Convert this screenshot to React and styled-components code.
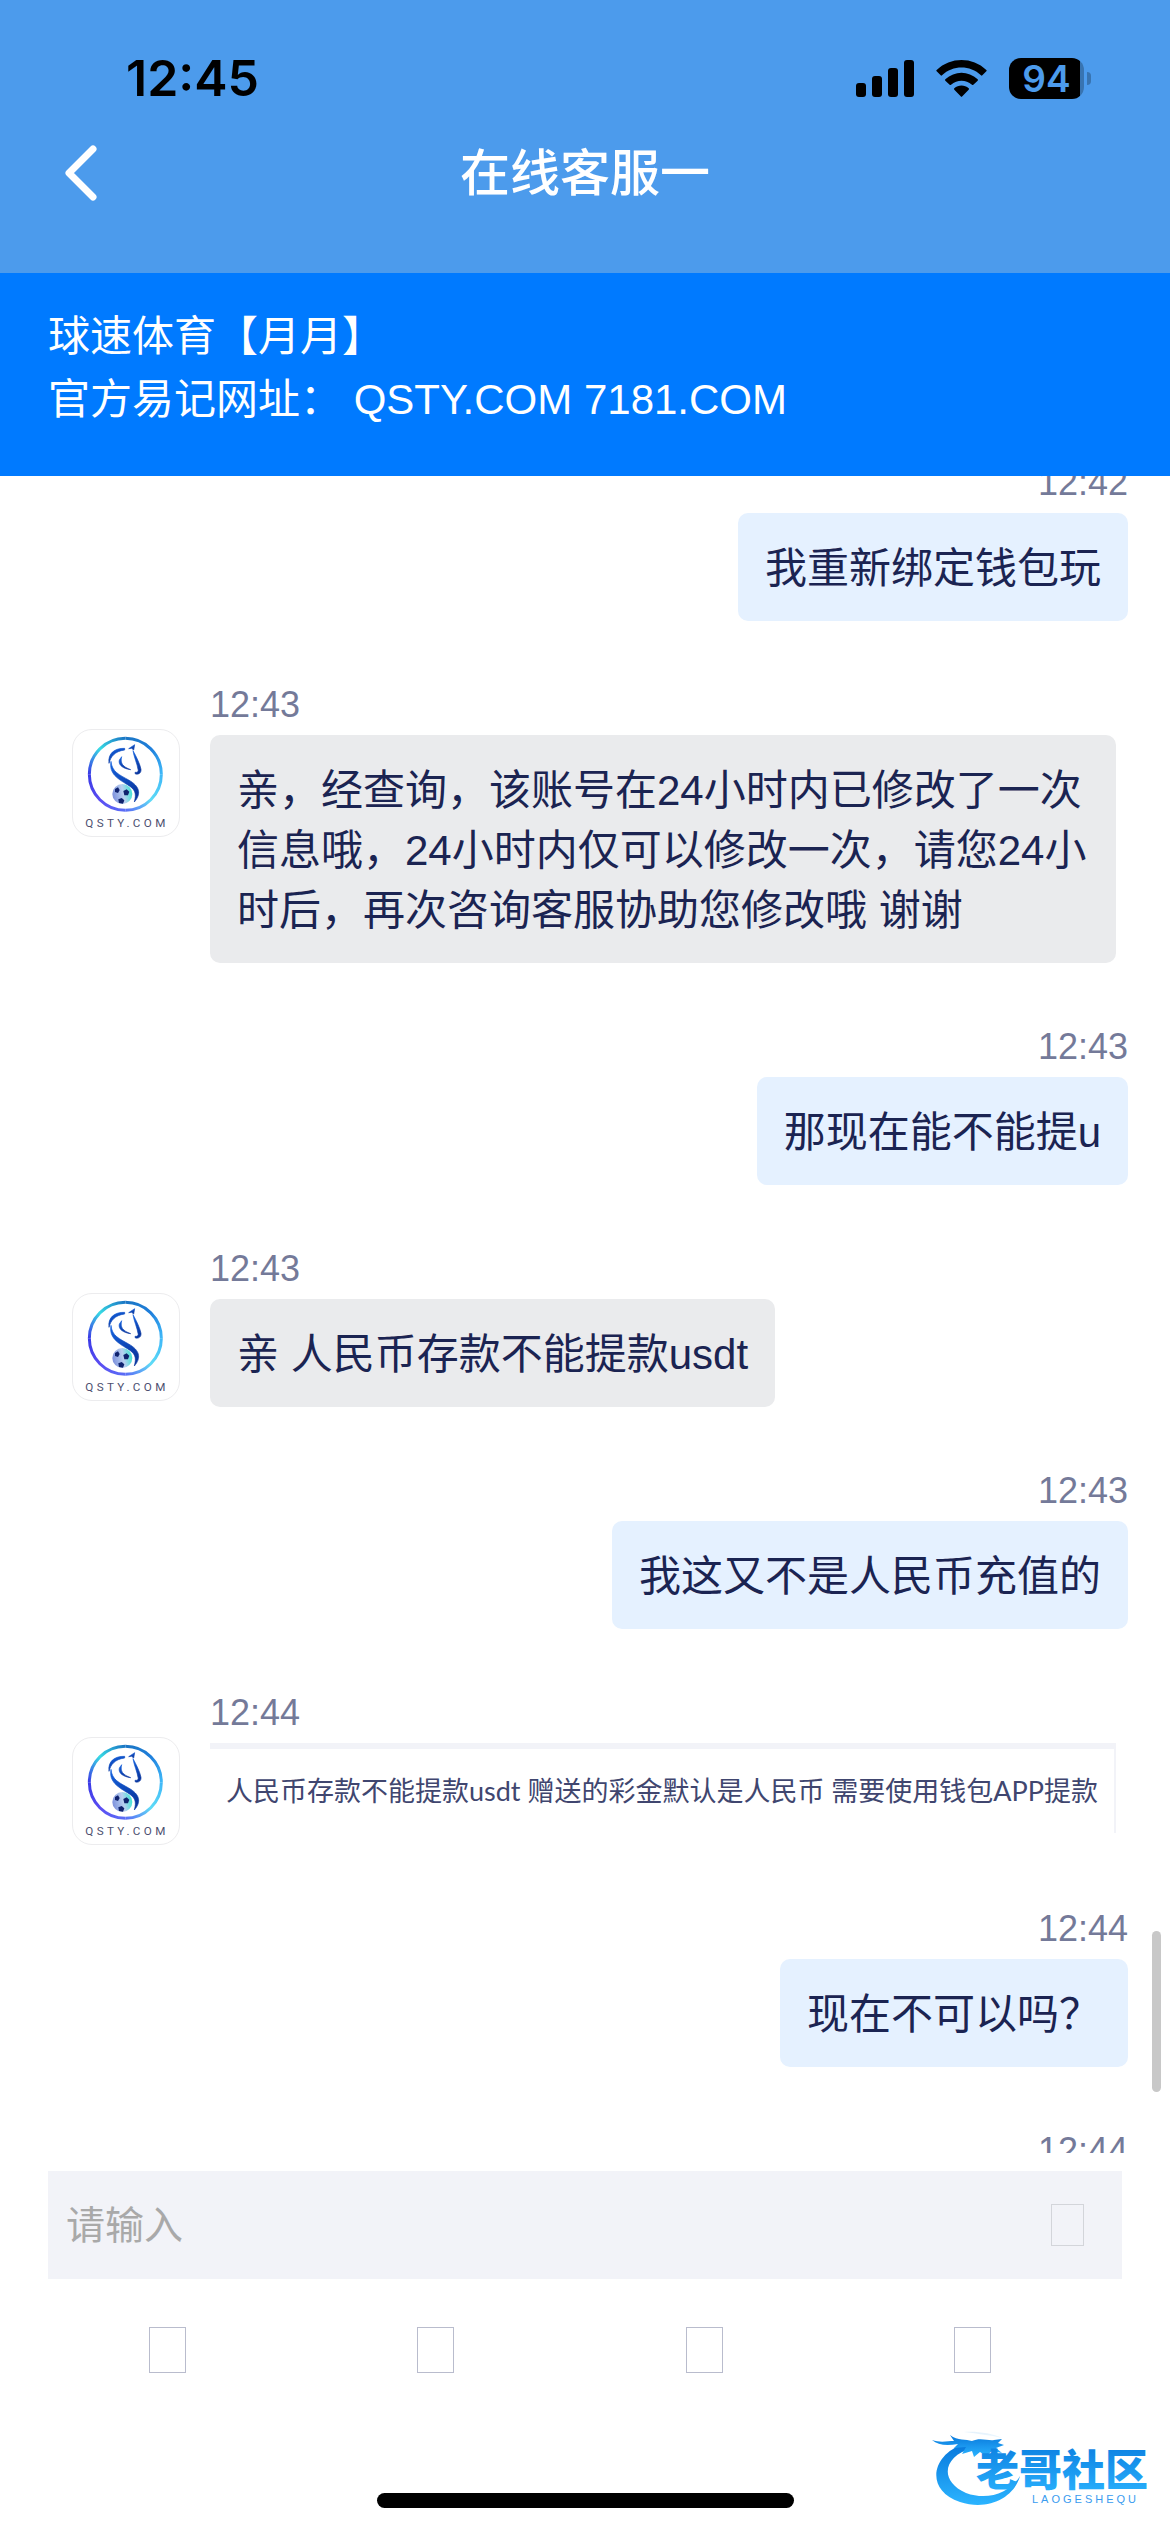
import React, { useId, useLayoutEffect, useRef, useState } from "react";
import styled, { createGlobalStyle } from "styled-components";

const GlobalStyle = createGlobalStyle`
  * {
    box-sizing: border-box;
  }
  body {
    margin: 0;
    background: #fff;
    color: #1b2452;
    font-family: "Liberation Sans", "Noto Sans CJK SC", sans-serif;
  }
  button, input {
    font-family: inherit;
  }
`;

const Page = styled.div`
  position: relative;
  display: flex;
  flex-direction: column;
  height: 100vh;
  overflow: hidden;
`;

const Header = styled.header`
  flex: none;
  background: #4c9bec;
  padding-bottom: 54px;
`;

const StatusBar = styled.div`
  display: flex;
  align-items: center;
  justify-content: space-between;
  height: 126px;
  padding: 30px 78px 0 126px;
  color: #000;
  font-family: Inter, sans-serif;
  font-weight: 600;
`;

const Clock = styled.div`
  font-size: 50px;
  line-height: 60px;
`;

const StatusIcons = styled.div`
  display: flex;
  align-items: center;
  gap: 22px;
`;

const Battery = styled.div`
  position: relative;
  width: 75px;
  height: 41px;
  margin-right: 8px;
  border-radius: 12px;
  background: linear-gradient(to right, #000 71px, #3874b1 71px);
  color: #4c9bec;
  font-size: 37px;
  line-height: 41px;
  text-align: center;
  &::after {
    content: "";
    position: absolute;
    right: -7px;
    top: 14px;
    width: 4px;
    height: 13px;
    border-radius: 0 4px 4px 0;
    background: #3874b1;
  }
`;

const NavBar = styled.nav`
  display: grid;
  grid-template-columns: 100px 1fr 100px;
  align-items: center;
  height: 93px;
  color: #fff;
`;

const BackButton = styled.button`
  display: flex;
  justify-content: flex-end;
  padding: 0;
  border: none;
  background: none;
  color: inherit;
  cursor: pointer;
`;

const Title = styled.h1`
  margin: 0;
  padding-top: 2px;
  font-size: 50px;
  font-weight: 500;
  line-height: 60px;
  text-align: center;
`;

const Notice = styled.div`
  flex: none;
  padding: 32px 48px 45px;
  background: #007aff;
  color: #fff;
  font-size: 42px;
  line-height: 63px;
`;

const NoticeLine = styled.p`
  margin: 0;
`;

const ChatArea = styled.main`
  position: relative;
  flex: 1;
  min-height: 0;
`;

const MessageList = styled.div`
  display: flex;
  flex-direction: column;
  gap: 60px;
  height: 100%;
  padding: 60px 42px 180px 72px;
  overflow-y: auto;
  scrollbar-width: none;
`;

const ScrollThumb = styled.div`
  position: absolute;
  right: 9px;
  bottom: 61px;
  width: 9px;
  height: 161px;
  border-radius: 5px;
  background: #c8c8c8;
`;

const MessageRow = styled.div`
  display: flex;
  flex: none;
  gap: 30px;
  justify-content: ${({ $mine }) => ($mine ? "flex-end" : "flex-start")};
  padding-right: ${({ $mine }) => ($mine ? "0" : "12px")};
`;

const MessageBody = styled.div`
  display: flex;
  flex-direction: column;
  align-items: ${({ $mine }) => ($mine ? "flex-end" : "flex-start")};
  gap: 6px;
  min-width: 0;
`;

const Time = styled.time`
  color: #747a99;
  font-size: 36px;
  line-height: 48px;
`;

const Bubble = styled.div`
  padding: 26px 27px 22px;
  border-radius: 10px;
  background: ${({ $mine }) => ($mine ? "#e5f1ff" : "#eaebed")};
  font-size: 42px;
  line-height: 60px;
`;

const Snippet = styled.div`
  display: flex;
  align-items: center;
  justify-content: center;
  width: 906px;
  max-width: 100%;
  height: 90px;
  margin-bottom: 12px;
  border: solid #f2f3f8;
  border-width: 6px 2px 0 0;
  color: #40466f;
  font-family: Lato, "Noto Sans CJK SC", sans-serif;
  font-size: 27px;
  line-height: 36px;
  white-space: nowrap;
`;

const AvatarFrame = styled.div`
  flex: none;
  width: 108px;
  height: 108px;
  margin-top: 48px;
  border: 1px solid #ececee;
  border-radius: 20px;
  overflow: hidden;
`;

const Footer = styled.footer`
  flex: none;
  padding-top: 18px;
`;

const InputBar = styled.form`
  display: flex;
  align-items: center;
  height: 108px;
  margin: 0 48px;
  padding: 0 38px 0 18px;
  background: #f2f3f8;
`;

const TextInput = styled.input`
  flex: 1;
  min-width: 0;
  padding: 2px 0 0;
  border: none;
  outline: none;
  background: none;
  color: #1b2452;
  font-size: 39px;
  line-height: 54px;
  &::placeholder {
    color: #a9a9a9;
    opacity: 1;
  }
`;

const SendButton = styled.button`
  width: 33px;
  height: 42px;
  padding: 0;
  border: 1px solid #d3d5da;
  background: none;
  cursor: pointer;
`;

const Toolbar = styled.div`
  display: grid;
  grid-template-columns: repeat(4, 1fr);
  place-items: center;
  height: 142px;
  padding: 0 63px 0 33px;
`;

const ToolButton = styled.button`
  width: 37px;
  height: 46px;
  padding: 0;
  border: 1px solid #b9bccd;
  background: none;
  cursor: pointer;
`;

const HomeArea = styled.div`
  display: flex;
  align-items: flex-end;
  justify-content: center;
  height: 111px;
  padding-bottom: 24px;
`;

const HomeIndicator = styled.div`
  width: 417px;
  height: 15px;
  border-radius: 8px;
  background: #000;
`;

const Watermark = styled.div`
  position: absolute;
  right: 14px;
  bottom: 22px;
  line-height: 0;
`;

const messages = [
  { id: 1, mine: true, time: "12:42", text: "我重新绑定钱包玩" },
  {
    id: 2,
    time: "12:43",
    text: "亲，经查询，该账号在24小时内已修改了一次信息哦，24小时内仅可以修改一次，请您24小时后，再次咨询客服协助您修改哦 谢谢",
  },
  { id: 3, mine: true, time: "12:43", text: "那现在能不能提u" },
  { id: 4, time: "12:43", text: "亲 人民币存款不能提款usdt" },
  { id: 5, mine: true, time: "12:43", text: "我这又不是人民币充值的" },
  {
    id: 6,
    time: "12:44",
    snippet: "人民币存款不能提款usdt 赠送的彩金默认是人民币 需要使用钱包APP提款",
  },
  { id: 7, mine: true, time: "12:44", text: "现在不可以吗？" },
  { id: 8, mine: true, time: "12:44" },
];

const tools = ["表情", "图片", "拍照", "文件"];

const SignalIcon = () => (
  <svg width="58" height="37" viewBox="0 0 58 37" aria-hidden="true">
    <rect x="0" y="23" width="10" height="14" rx="3" />
    <rect x="16" y="16" width="10" height="21" rx="3" />
    <rect x="32" y="8" width="10" height="29" rx="3" />
    <rect x="48" y="0" width="10" height="37" rx="3" />
  </svg>
);

const WifiIcon = () => (
  <svg width="51" height="37" viewBox="0 0 153 111" aria-hidden="true">
    <path d="M2 30 C44 -10 109 -10 151 30 Q153 32 151 34 L139 46 Q137 48 135 46 C102 15 51 15 18 46 Q16 48 14 46 L2 34 Q0 32 2 30 Z" />
    <path d="M28 58 C56 32 97 32 125 58 Q127 60 125 62 L112 74 Q110 76 108 74 C89 58 64 58 45 74 Q43 76 41 74 L28 62 Q26 60 28 58 Z" />
    <path d="M55 85 C67 74 86 74 98 85 Q100 87 98 89 L79 109 Q76 112 74 109 L55 89 Q53 87 55 85 Z" />
  </svg>
);

const BackIcon = () => (
  <svg width="36" height="56" viewBox="0 0 36 56" fill="none" aria-hidden="true">
    <path
      d="M29 4 L5 28 L29 52"
      stroke="currentColor"
      strokeWidth="7"
      strokeLinecap="round"
      strokeLinejoin="round"
    />
  </svg>
);

const Avatar = () => {
  const id = useId();
  // each quarter of the ring fades through three colours
  const quarters = [
    { d: "M88 163 A108 108 0 0 1 196 55", from: [0, 1], to: [1, 0], colors: ["#3b3be6", "#38dbe4", "#1b76c4"] },
    { d: "M196 55 A108 108 0 0 1 304 163", from: [0, 0], to: [1, 1], colors: ["#1b76c4", "#1f7fdc", "#3fb8f8"] },
    { d: "M304 163 A108 108 0 0 1 196 271", from: [1, 0], to: [0, 1], colors: ["#3fb8f8", "#5fdcf6", "#5a6df6"] },
    { d: "M196 271 A108 108 0 0 1 88 163", from: [1, 1], to: [0, 0], colors: ["#5a6df6", "#5b4df2", "#3b3be6"] },
  ];

  return (
    <AvatarFrame>
      <svg width="106" height="106" viewBox="39 30 318 318" fill="none" role="img" aria-label="QSTY.COM">
        <defs>
          {quarters.map(({ from, to, colors }, i) => (
            <linearGradient key={i} id={`${id}q${i}`} x1={from[0]} y1={from[1]} x2={to[0]} y2={to[1]}>
              <stop offset="0" stopColor={colors[0]} />
              <stop offset="0.5" stopColor={colors[1]} />
              <stop offset="1" stopColor={colors[2]} />
            </linearGradient>
          ))}
          <linearGradient id={`${id}horse`} x1="0" y1="0" x2="0.4" y2="1">
            <stop offset="0" stopColor="#1463e0" />
            <stop offset="1" stopColor="#0a37a0" />
          </linearGradient>
          <linearGradient id={`${id}ball`} x1="0" y1="0.6" x2="1" y2="0.4">
            <stop offset="0" stopColor="#7b8fdc" />
            <stop offset="0.55" stopColor="#b8d0f0" />
            <stop offset="1" stopColor="#3fe6d4" />
          </linearGradient>
        </defs>
        {quarters.map(({ d }, i) => (
          <path key={i} d={d} stroke={`url(#${id}q${i})`} strokeWidth="9" />
        ))}
        <g fill={`url(#${id}horse)`} stroke={`url(#${id}horse)`} strokeWidth="2" strokeLinejoin="round">
          <path d="M194 85 C164 84 143 100 147 130 C152 110 164 94 194 90 Z" />
          <path d="M206 86 L224 74 L221 90 L215 85 Z" />
          <path d="M219 92 C228 108 240 132 243 148 C244 159 236 164 226 162 L225 157 C233 158 236 154 234 148 C232 132 222 112 219 92 Z" />
          <path d="M185 110 C180 130 188 140 212 149 C190 146 174 136 178 120 Z" />
          <path d="M153 124 C156 156 178 164 206 180 C240 199 244 222 223 246 C230 220 226 208 202 194 C172 176 146 160 153 124 Z" />
        </g>
        <circle cx="187" cy="222" r="30" fill={`url(#${id}ball)`} />
        <g fill="#10236e">
          <path d="M190 213 L200 208 L208 215 L204 226 L193 226 Z" />
          <path d="M165 207 L174 202 L179 210 L174 219 L165 216 Z" />
          <path d="M175 238 L185 234 L193 241 L189 251 L177 249 Z" />
        </g>
        <text x="76" y="320" fill="#4d4f70" fontFamily="Roboto, sans-serif" fontSize="35" fontWeight="400" letterSpacing="10">
          QSTY.COM
        </text>
      </svg>
    </AvatarFrame>
  );
};

const CommunityLogo = () => (
  <svg width="226" height="84" viewBox="0 0 226 84" role="img" aria-label="老哥社区">
    <defs>
      <linearGradient id="communityRing" x1="0" y1="0" x2="0" y2="1">
        <stop offset="0" stopColor="#0878dc" />
        <stop offset="1" stopColor="#2bb4ff" />
      </linearGradient>
    </defs>
    <g fill="url(#communityRing)">
      <path d="M34 18 C2 28 -6 64 30 76 C58 85 84 72 90 50 C80 67 58 75 36 67 C8 54 14 30 42 22 Z" />
      <path d="M2 14 C10 17 18 15 24 15 L20 9 C28 15 36 13 42 15 C50 11 58 15 64 14 L72 13 L68 17 L74 19 L66 22 L72 27 L62 25 L56 30 L50 26 L44 31 L42 25 L32 28 L36 21 L24 22 L28 18 C16 20 8 19 2 14 Z" />
      <path d="M34 6 C46 5 62 7 72 12 C60 9 48 8 34 6 Z" opacity="0.1" />
    </g>
    <text
      x="46"
      y="60"
      fill="url(#communityRing)"
      fontFamily="Noto Sans CJK SC, sans-serif"
      fontSize="43"
      fontWeight="900"
    >
      老哥社区
    </text>
    <text x="102" y="77" fill="#3a9cf0" fontFamily="Liberation Sans, sans-serif" fontSize="11" letterSpacing="3">
      LAOGESHEQU
    </text>
  </svg>
);

const Message = ({ mine, time, text, snippet }) => (
  <MessageRow $mine={mine}>
    {!mine && <Avatar />}
    <MessageBody $mine={mine}>
      <Time>{time}</Time>
      {text && <Bubble $mine={mine}>{text}</Bubble>}
      {snippet && <Snippet>{snippet}</Snippet>}
    </MessageBody>
  </MessageRow>
);

const App = () => {
  const [draft, setDraft] = useState("");
  const listRef = useRef(null);

  useLayoutEffect(() => {
    listRef.current.scrollTop = 77;
  }, []);

  return (
    <Page lang="zh-CN">
      <GlobalStyle />
      <Header>
        <StatusBar>
          <Clock>12:45</Clock>
          <StatusIcons>
            <SignalIcon />
            <WifiIcon />
            <Battery>94</Battery>
          </StatusIcons>
        </StatusBar>
        <NavBar>
          <BackButton type="button" aria-label="返回">
            <BackIcon />
          </BackButton>
          <Title>在线客服一</Title>
        </NavBar>
      </Header>
      <Notice>
        <NoticeLine>球速体育【月月】</NoticeLine>
        <NoticeLine>官方易记网址： QSTY.COM 7181.COM</NoticeLine>
      </Notice>
      <ChatArea>
        <MessageList ref={listRef}>
          {messages.map((message) => (
            <Message key={message.id} {...message} />
          ))}
        </MessageList>
        <ScrollThumb />
      </ChatArea>
      <Footer>
        <InputBar onSubmit={(e) => e.preventDefault()}>
          <TextInput
            type="text"
            aria-label="请输入"
            placeholder="请输入"
            value={draft}
            onChange={(e) => setDraft(e.target.value)}
          />
          <SendButton type="submit" aria-label="发送" />
        </InputBar>
        <Toolbar>
          {tools.map((tool) => (
            <ToolButton key={tool} type="button" aria-label={tool} />
          ))}
        </Toolbar>
        <HomeArea>
          <HomeIndicator />
        </HomeArea>
      </Footer>
      <Watermark>
        <CommunityLogo />
      </Watermark>
    </Page>
  );
};

export default App;
